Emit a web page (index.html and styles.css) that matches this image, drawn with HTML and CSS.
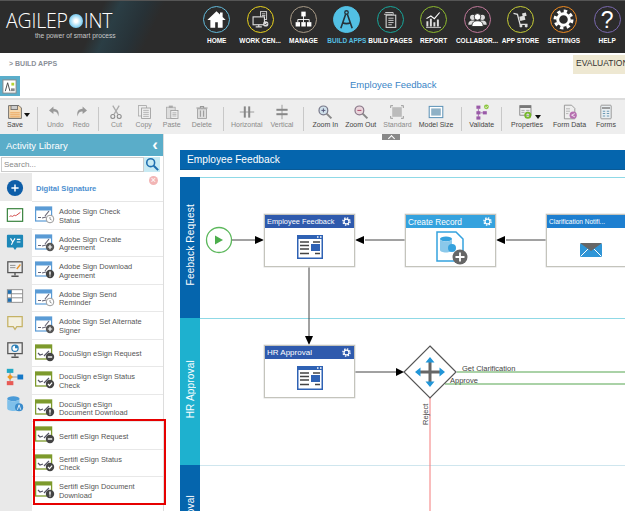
FILE: index.html
```html
<!DOCTYPE html>
<html lang="en">
<head>
<meta charset="utf-8">
<title>Build Apps</title>
<link rel="stylesheet" href="styles.css">
</head>
<body>
<svg class="defs" width="0" height="0" aria-hidden="true">
  <defs>
    <symbol id="gear" viewBox="0 0 20 20">
      <circle cx="10" cy="10" r="5.5" fill="none" stroke="currentColor" stroke-width="2.8"/>
      <circle cx="10" cy="10" r="8" fill="none" stroke="currentColor" stroke-width="3" stroke-dasharray="3.2 3.08"/>
    </symbol>
    <symbol id="sig-blue" viewBox="0 0 20 18">
      <rect x=".6" y="1" width="16" height="14" fill="#fff" stroke="#5a9bd5" stroke-width="1.200"/>
      <rect x="0" y="1" width="17" height="3.5" fill="#5a9bd5"/>
      <path d="M3 11.5h3M7 12l4-1M10 10l4-5" stroke="#667" stroke-width="1.2" fill="none"/>
    </symbol>
    <symbol id="sig-green" viewBox="0 0 20 18">
      <rect x=".6" y="1" width="16" height="14" fill="#fff" stroke="#7d9a2c" stroke-width="1.300"/>
      <rect x="0" y="1" width="17" height="3.5" fill="#7d9a2c"/>
      <path d="M3 9l2 2 3-1M9 12l5-5" stroke="#556" stroke-width="1.2" fill="none"/>
    </symbol>
    <symbol id="b-plus" viewBox="0 0 20 18">
      <circle cx="15" cy="13" r="4.2" fill="#555"/><path d="M12.8 13h4.4M15 10.8v4.4" stroke="#fff" stroke-width="1.2"/>
    </symbol>
    <symbol id="b-minus" viewBox="0 0 20 18">
      <circle cx="15" cy="13" r="4.2" fill="#444"/><path d="M12.8 13h4.4" stroke="#fff" stroke-width="1.4"/>
    </symbol>
    <symbol id="b-check" viewBox="0 0 20 18">
      <circle cx="15" cy="13" r="4.2" fill="#444"/><path d="M13 13l1.5 1.6 2.6-3" stroke="#fff" stroke-width="1.2" fill="none"/>
    </symbol>
    <symbol id="b-info" viewBox="0 0 20 18">
      <circle cx="15" cy="13" r="4.2" fill="#444"/><path d="M15 10.6v3.2M15 14.4v1.2" stroke="#fff" stroke-width="1.4"/>
    </symbol>
    <symbol id="b-clock" viewBox="0 0 20 18">
      <circle cx="15" cy="13" r="3.8" fill="#fff" stroke="#999"/><path d="M15 11v2.2l1.6.8" stroke="#999" fill="none"/>
    </symbol>
    <symbol id="form" viewBox="0 0 26 24">
      <rect x="0" y="0" width="26" height="24" fill="#2f62b4"/>
      <rect x="1.5" y="4" width="23" height="18.5" fill="#fff"/>
      <path d="M20 2h1.5M23 2h1.5" stroke="#fff" stroke-width="1.4"/>
      <path d="M3 7h9M3 10.5h9M3 14h9M3 18.5h9M16 7h7M18 18.5h5" stroke="#444" stroke-width="1.6"/>
      <rect x="14" y="9" width="9" height="7" fill="#2f62b4"/>
    </symbol>
  </defs>
</svg>

<header class="topbar">
  <div class="logo">
    <div class="logo-word">AGILEP<span class="logo-dot"></span>INT</div>
    <div class="logo-tag">the power of smart process</div>
  </div>
  <nav class="nav">
    <div class="nav-item"><span class="ring ring-home"><svg viewBox="0 0 24 24"><path d="M12 2.500L1.500 12.500h3.500v9h5.500v-6.500h3v6.500h5.500v-9h3.500l-3.500-3.300V4h-3v2.400z" fill="#fff"/></svg></span><span class="nav-label">HOME</span></div>
    <div class="nav-item"><span class="ring ring-work"><svg viewBox="0 0 24 24"><rect x="12" y="3" width="7" height="9" fill="#2d2d2d" stroke="#ddd"/><path d="M13.5 5.5h4M13.5 7.5h4" stroke="#ddd"/><rect x="3.5" y="9" width="13" height="9" fill="#2d2d2d" stroke="#ddd" stroke-width="1.3"/><path d="M10 18v2M6.500 20.500h7" stroke="#ddd" stroke-width="1.300"/><circle cx="18" cy="17" r="3" fill="#ddd"/><path d="M16.500 17l1.200 1.200 2-2.200" stroke="#2d2d2d" fill="none"/></svg></span><span class="nav-label">WORK CEN...</span></div>
    <div class="nav-item"><span class="ring ring-manage"><svg viewBox="0 0 24 24"><path d="M12 8v4M5.500 15v-3h13v3M12 12v3" stroke="#fff" fill="none"/><rect x="9.500" y="3" width="5" height="5.500" fill="#fff"/><rect x="3" y="15" width="5" height="5" fill="#fff"/><rect x="9.500" y="15" width="5" height="5" fill="#fff"/><rect x="16" y="15" width="5" height="5" fill="#fff"/></svg></span><span class="nav-label">MANAGE</span></div>
    <div class="nav-item nav-active"><span class="ring ring-apps"><svg viewBox="0 0 24 24"><circle cx="12" cy="4" r="2" fill="none" stroke="#26323a" stroke-width="1.500"/><path d="M11 6L5.500 22M13 6L18.500 22M7 15.500c3 1.500 7 1.500 10 0" stroke="#26323a" stroke-width="1.800" fill="none"/></svg></span><span class="nav-label">BUILD APPS</span></div>
    <div class="nav-item"><span class="ring ring-pages"><svg viewBox="0 0 24 24"><path d="M6 4h9v3M4.500 6h9v3" fill="none" stroke="#ddd"/><rect x="7" y="7" width="11" height="14" fill="#2d2d2d" stroke="#ddd" stroke-width="1.200"/><path d="M9.500 10.500h6M9.500 13h6M9.500 15.500h6M9.500 18h4" stroke="#ddd"/></svg></span><span class="nav-label">BUILD PAGES</span></div>
    <div class="nav-item"><span class="ring ring-report"><svg viewBox="0 0 24 24"><path d="M5 20v-6M9 20v-9M13 20v-5M17 20v-8" stroke="#ddd" stroke-width="2.200"/><path d="M3.500 21h17" stroke="#ddd"/><path d="M4 11l5-3 4 3 6-7" stroke="#fff" stroke-width="1.300" fill="none"/></svg></span><span class="nav-label">REPORT</span></div>
    <div class="nav-item"><span class="ring ring-collab"><svg viewBox="0 0 24 24"><circle cx="6.500" cy="9.500" r="3" fill="#ddd"/><circle cx="17.500" cy="9.500" r="3" fill="#ddd"/><path d="M1.500 18c0-4 2-5 5-5s5 1 5 5zM12.500 18c0-4 2-5 5-5s5 1 5 5z" fill="#ddd"/><circle cx="12" cy="9" r="3.800" fill="#fff" stroke="#2d2d2d"/><path d="M5.500 20c0-5 3-6.500 6.500-6.500s6.500 1.500 6.500 6.500z" fill="#fff" stroke="#2d2d2d"/></svg></span><span class="nav-label">COLLABOR...</span></div>
    <div class="nav-item"><span class="ring ring-store"><svg viewBox="0 0 24 24"><path d="M4 5l4.500 1 3 11.500H20" stroke="#ddd" stroke-width="1.500" fill="none"/><rect x="11" y="8" width="6" height="5" fill="#ddd" transform="rotate(-14 14 10)"/><rect x="14" y="4.500" width="4.500" height="4" fill="#ddd" transform="rotate(-14 16 6)"/><circle cx="12.500" cy="19.500" r="1.700" fill="#ddd"/><circle cx="18.500" cy="19.500" r="1.700" fill="#ddd"/></svg></span><span class="nav-label">APP STORE</span></div>
    <div class="nav-item"><span class="ring ring-settings"><svg class="gear-white" viewBox="0 0 20 20"><use href="#gear"/></svg></span><span class="nav-label">SETTINGS</span></div>
    <div class="nav-item"><span class="ring ring-help"><span class="help-mark">?</span></span><span class="nav-label">HELP</span></div>
  </nav>
</header>

<div class="crumbs">
  <span class="crumb-text">&gt; BUILD APPS</span>
  <span class="eval">EVALUATION</span>
</div>

<div class="titlerow">
  <span class="app-tile"><svg viewBox="0 0 16 16"><rect x="1" y="1" width="14" height="14" fill="#fff" stroke="#888"/><path d="M6 4L3.500 13M6 4l2.500 9" stroke="#444" fill="none"/><rect x="10" y="4" width="3" height="3" fill="#b5d334"/><rect x="9.500" y="10" width="4" height="3" fill="#888"/></svg></span>
  <span class="app-title">Employee Feedback</span>
</div>

<div class="toolbar">
  <div class="tool tool-save"><svg viewBox="0 0 20 20"><path d="M2 2h13l3 3v13H2z" fill="#f6d9b0" stroke="#555"/><rect x="5" y="2" width="8" height="5" fill="#ccc" stroke="#666"/><path d="M4 11h12M4 13.500h12M4 16h12" stroke="#e89a4a"/></svg><span class="lbl lbl-dark">Save</span></div>
  <i class="caret caret-save"></i>
  <i class="sep sep-a"></i>
  <div class="group g-undo">
    <div class="tool"><svg viewBox="0 0 20 20"><path d="M8 3L2.500 8 8 12.500V9.500c3.500 0 5.500 1.500 6 6 2-5-.5-9.500-6-9.500z" fill="#999"/></svg><span class="lbl">Undo</span></div>
    <div class="tool"><svg viewBox="0 0 20 20"><path d="M12 3l5.500 5-5.500 4.500V9.500c-3.500 0-5.500 1.500-6 6-2-5 .5-9.500 6-9.500z" fill="#999"/></svg><span class="lbl">Redo</span></div>
  </div>
  <i class="sep sep-b"></i>
  <div class="group g-edit">
    <div class="tool"><svg viewBox="0 0 20 20"><path d="M6 2l6.500 11M14 2L7.500 13" stroke="#aaa" stroke-width="1.600"/><circle cx="6" cy="15.500" r="2.500" fill="none" stroke="#8a8a8a" stroke-width="1.300"/><circle cx="14" cy="15.500" r="2.500" fill="none" stroke="#8a8a8a" stroke-width="1.300"/></svg><span class="lbl">Cut</span></div>
    <div class="tool"><svg viewBox="0 0 20 20"><path d="M3 2h9v3" fill="none" stroke="#aaa"/><rect x="3" y="2" width="10" height="13" fill="#eee" stroke="#aaa"/><rect x="7" y="5" width="11" height="13" fill="#eee" stroke="#999"/><path d="M9 8h7M9 10.500h7M9 13h7M9 15.500h7" stroke="#aaa"/></svg><span class="lbl">Copy</span></div>
    <div class="tool"><svg viewBox="0 0 20 20"><rect x="3" y="4" width="11" height="14" fill="#ddd" stroke="#aaa"/><rect x="6" y="2" width="5" height="3" fill="#aaa"/><rect x="8.500" y="8" width="9" height="10" fill="#eee" stroke="#999"/><path d="M10.500 11h5M10.500 13h5M10.500 15h5" stroke="#aaa"/></svg><span class="lbl">Paste</span></div>
    <div class="tool"><svg viewBox="0 0 20 20"><path d="M3 5h14M8 5V3h4v2" stroke="#999" fill="none" stroke-width="1.300"/><rect x="4.500" y="6" width="11" height="12" fill="#ddd" stroke="#999"/><path d="M8 8v8M12 8v8" stroke="#999" stroke-width="1.300"/></svg><span class="lbl">Delete</span></div>
  </div>
  <i class="sep sep-c"></i>
  <div class="group g-align">
    <div class="tool"><svg viewBox="0 0 20 20"><path d="M1 10h18" stroke="#888"/><rect x="6" y="3" width="2.500" height="14" fill="#888"/><rect x="11.500" y="3" width="2.500" height="14" fill="#888"/></svg><span class="lbl">Horizontal</span></div>
    <div class="tool"><svg viewBox="0 0 20 20"><path d="M10 1v18" stroke="#888"/><rect x="3" y="6" width="14" height="2.500" fill="#888"/><rect x="3" y="11.500" width="14" height="2.500" fill="#888"/></svg><span class="lbl">Vertical</span></div>
  </div>
  <i class="sep sep-d"></i>
  <div class="group g-zoom">
    <div class="tool"><svg viewBox="0 0 20 20"><circle cx="8" cy="8" r="5.500" fill="#cfe0ea" stroke="#778"  stroke-width="1.500"/><path d="M5.500 8h5M8 5.500v5" stroke="#557" stroke-width="1.200"/><path d="M12 12l6 6" stroke="#888" stroke-width="2.500"/></svg><span class="lbl lbl-dark">Zoom In</span></div>
    <div class="tool"><svg viewBox="0 0 20 20"><circle cx="8" cy="8" r="5.500" fill="#ead5dc" stroke="#878" stroke-width="1.500"/><path d="M5.500 8h5" stroke="#a46" stroke-width="1.200"/><path d="M12 12l6 6" stroke="#888" stroke-width="2.500"/></svg><span class="lbl lbl-dark">Zoom Out</span></div>
    <div class="tool"><svg viewBox="0 0 20 20"><rect x="4" y="4" width="12" height="12" fill="#bbb"/><path d="M2 2h3M2 2v3M18 2h-3M18 2v3M2 18h3M2 18v-3M18 18h-3M18 18v-3" stroke="#aaa" stroke-width="1.500"/></svg><span class="lbl">Standard</span></div>
    <div class="tool"><svg viewBox="0 0 20 20"><rect x="1.500" y="3" width="17" height="14" fill="#fff" stroke="#5f94b8" stroke-width="1.300"/><rect x="4" y="5.500" width="12" height="9" fill="#8fb1c6"/></svg><span class="lbl lbl-dark">Model Size</span></div>
  </div>
  <i class="sep sep-e"></i>
  <div class="tool tool-validate"><svg viewBox="0 0 20 20"><rect x="3" y="2" width="5" height="4" fill="#9a5aa8"/><rect x="3" y="9" width="5" height="4" fill="#9a5aa8"/><rect x="3" y="15.500" width="5" height="4" fill="#9a5aa8"/><rect x="11" y="9" width="5" height="4" fill="#9a5aa8"/><path d="M5.500 6v10M8 11h3" stroke="#9a5aa8"/><circle cx="15.500" cy="3.500" r="3" fill="#8cc63f"/><path d="M14 3.500l1.200 1.200 1.800-2" stroke="#fff" fill="none"/></svg><span class="lbl lbl-dark">Validate</span></div>
  <i class="sep sep-f"></i>
  <div class="group g-props">
    <div class="tool tool-props"><svg viewBox="0 0 20 20"><rect x="1" y="2" width="14" height="12" fill="#eee" stroke="#777"/><rect x="1" y="2" width="14" height="3" fill="#777"/><path d="M3 8h4M3 10.500h4M9 8h4M9 10.500h4" stroke="#999"/><circle cx="11" cy="14" r="3.200" fill="none" stroke="#76b82a" stroke-width="2.400"/></svg><i class="caret caret-props"></i><span class="lbl lbl-dark">Properties</span></div>
    <div class="tool"><svg viewBox="0 0 20 20"><path d="M3 1.500h9l4 4v13H3z" fill="#eee" stroke="#888"/><path d="M5 6h5M5 9h5M5 12h3" stroke="#aaa"/><circle cx="14" cy="14" r="4.500" fill="#b66fb0"/><path d="M12 14l4-2M12 14l4 2" stroke="#fff"/></svg><span class="lbl lbl-dark">Form Data</span></div>
    <div class="tool"><svg viewBox="0 0 20 20"><rect x="3.500" y="1.500" width="13" height="17" rx="1" fill="#e9eef1" stroke="#888"/><rect x="5" y="4" width="10" height="2" fill="#888"/><path d="M6 9h3M6 12h3M6 15h3M11 9h3M11 12h3M11 15h3" stroke="#6d9ab5" stroke-width="1.300"/></svg><span class="lbl lbl-dark">Forms</span></div>
  </div>
</div>

<main class="workspace">
  <aside class="library">
    <div class="lib-head"><span>Activity Library</span><span class="lib-chev">&#8249;</span></div>
    <div class="lib-search">
      <input class="lib-input" type="text" placeholder="Search...">
      <span class="lib-btn"><svg viewBox="0 0 16 16"><circle cx="6.500" cy="6.500" r="4.500" fill="none" stroke="#1f6fb0" stroke-width="1.800"/><path d="M10 10l5 5" stroke="#1f6fb0" stroke-width="2.400"/></svg></span>
    </div>
    <div class="lib-body">
      <div class="tabs">
        <div class="tab"><svg viewBox="0 0 20 20"><circle cx="10" cy="10" r="9" fill="#0e5ea8"/><path d="M6 10h8M10 6v8" stroke="#fff" stroke-width="1.600"/></svg></div>
        <div class="tab tab-on"><svg viewBox="0 0 20 20"><rect x="1.500" y="3" width="17" height="14" fill="#fff" stroke="#35803a" stroke-width="1.300"/><path d="M4 12c2-3 2 1 4-1s2 1 4-1l4-3" stroke="#c33" fill="none"/></svg></div>
        <div class="tab"><svg viewBox="0 0 20 20"><path d="M2 2h16a1 1 0 011 1v12a1 1 0 01-1 1h-6l-2 3-2-3H2a1 1 0 01-1-1V3a1 1 0 011-1z" fill="#1e88b8"/><path d="M5 6l2.500 4L10 6M7.500 10l-1.500 3M12 7h4M12 10h4" stroke="#fff" stroke-width="1.300" fill="none"/></svg></div>
        <div class="tab"><svg viewBox="0 0 20 20"><rect x="2" y="2" width="16" height="12" fill="#eee" stroke="#555" stroke-width="1.400"/><path d="M4.500 6h6M4.500 8.500h6" stroke="#888"/><path d="M12 10l4-5" stroke="#e8942a" stroke-width="1.500"/><path d="M10 14v3M6 18h8" stroke="#555" stroke-width="1.500"/></svg></div>
        <div class="tab"><svg viewBox="0 0 20 20"><rect x="1.500" y="3" width="17" height="14" fill="#fff" stroke="#888"/><path d="M1.500 7.500h17M1.500 12h17M6 3v14" stroke="#888"/><rect x="2" y="3.500" width="4" height="4" fill="#1f6fb0"/><rect x="2" y="12.500" width="4" height="4" fill="#1f6fb0"/></svg></div>
        <div class="tab"><svg viewBox="0 0 20 20"><path d="M2 3h16v11h-6l-2 3-2-3H2z" fill="#f3f0e2" stroke="#c5b265" stroke-width="1.400"/></svg></div>
        <div class="tab"><svg viewBox="0 0 20 20"><rect x="2" y="2" width="16" height="12" fill="#eee" stroke="#555" stroke-width="1.400"/><circle cx="10" cy="8" r="3.500" fill="#fff" stroke="#2a7fb8" stroke-width="1.300"/><path d="M10 8V4.500A3.500 3.500 0 0113.500 8z" fill="#2a7fb8"/><path d="M10 14v3M6 18h8" stroke="#555" stroke-width="1.500"/></svg></div>
        <div class="tab"><svg viewBox="0 0 22 22"><rect x="1" y="1" width="8" height="5" fill="#22a8c4"/><path d="M5 6v10M5 11h11" stroke="#888"/><path d="M5 7.500l3.500 3.500L5 14.500 1.500 11z" fill="#f29a1f"/><rect x="14" y="8" width="7" height="6" fill="#1478c8"/><rect x="1" y="16" width="8" height="5" fill="#e85a55"/></svg></div>
        <div class="tab"><svg viewBox="0 0 22 22"><ellipse cx="9" cy="4.500" rx="7.500" ry="3" fill="#4a9bd8"/><path d="M1.500 4.500v12c0 1.700 3.400 3 7.500 3s7.500-1.300 7.500-3v-12c0 1.700-3.400 3-7.500 3s-7.500-1.300-7.500-3z" fill="#7fc0ea"/><circle cx="16" cy="15" r="5" fill="#3a8ccc"/><path d="M14 18l2-6 2 6" stroke="#fff" fill="none"/></svg></div>
      </div>
      <div class="items">
        <div class="group-row"><span class="group-name">Digital Signature</span><span class="group-x">&#215;</span></div>
        <div class="item"><svg class="ai"><use href="#sig-blue"/><use href="#b-clock"/></svg><span>Adobe Sign Check Status</span></div>
        <div class="item"><svg class="ai"><use href="#sig-blue"/><use href="#b-plus"/></svg><span>Adobe Sign Create Agreement</span></div>
        <div class="item"><svg class="ai"><use href="#sig-blue"/><use href="#b-info"/></svg><span>Adobe Sign Download Agreement</span></div>
        <div class="item"><svg class="ai"><use href="#sig-blue"/><use href="#b-clock"/></svg><span>Adobe Sign Send Reminder</span></div>
        <div class="item"><svg class="ai"><use href="#sig-blue"/><use href="#b-plus"/></svg><span>Adobe Sign Set Alternate Signer</span></div>
        <div class="item"><svg class="ai"><use href="#sig-green"/><use href="#b-minus"/></svg><span>DocuSign eSign Request</span></div>
        <div class="item"><svg class="ai"><use href="#sig-green"/><use href="#b-check"/></svg><span>DocuSign eSign Status Check</span></div>
        <div class="item"><svg class="ai"><use href="#sig-green"/><use href="#b-info"/></svg><span>DocuSign eSign<br>Document Download</span></div>
        <div class="item"><svg class="ai"><use href="#sig-green"/><use href="#b-minus"/></svg><span>Sertifi eSign Request</span></div>
        <div class="item"><svg class="ai"><use href="#sig-green"/><use href="#b-check"/></svg><span>Sertifi eSign Status Check</span></div>
        <div class="item"><svg class="ai"><use href="#sig-green"/><use href="#b-info"/></svg><span>Sertifi eSign Document Download</span></div>
      </div>
    </div>
    <div class="redbox"></div>
  </aside>

  <section class="canvas">
    <span class="collapse-tab"></span>
    <div class="canvas-title">Employee Feedback</div>
    <div class="lanes">
      <div class="lane lane-1"><div class="lane-label"><span>Feeback Request</span></div></div>
      <div class="lane lane-2"><div class="lane-label"><span>HR Approval</span></div></div>
      <div class="lane lane-3"><div class="lane-label"><span>Approval</span></div></div>
    </div>

    <svg class="wires" width="445" height="377" viewBox="0 0 445 377">
      <g stroke="#444" stroke-width="1" fill="none">
        <path d="M52 106H76"/>
        <path d="M225 106H185"/>
        <path d="M366 106H326"/>
        <path d="M129 133V203"/>
        <path d="M174 238H216"/>
      </g>
      <g fill="#000">
        <path d="M84 106l-9-4v8z"/>
        <path d="M175 106l9-4v8z"/>
        <path d="M316 106l9-4v8z"/>
        <path d="M129 211l-4-9h8z"/>
        <path d="M224 238l-8-4v8z"/>
      </g>
      <circle cx="39" cy="106" r="12.500" fill="#fff" stroke="#5cb85c" stroke-width="1.300"/>
      <path d="M35 101.500l8 4.500-8 4.500z" fill="#4cae4c"/>
      <path d="M277 238H445M265 250H445" stroke="#8fc48a" stroke-width="1.300" fill="none"/>
      <path d="M250 264V377" stroke="#f47b7b" stroke-width="1" fill="none"/>
      <path d="M250 212l26 26-26 26-26-26z" fill="#fff" stroke="#555" stroke-width="1.200"/>
      <path d="M250 227v22M239 238h22" stroke="#666" stroke-width="3"/>
      <path d="M250 223l4.500 5.500h-9zM250 253l4.500-5.500h-9zM235 238l5.500-4.500v9zM265 238l-5.500-4.500v9z" fill="#2196d8"/>
      <text class="wire-text" x="282" y="237">Get Clarification</text>
      <text class="wire-text" x="270" y="249">Approve</text>
      <text class="wire-text" transform="translate(248 291) rotate(-90)">Reject</text>
    </svg>

    <div class="node node-ef">
      <div class="node-head head-navy"><span class="head-ef">Employee Feedback</span><svg class="node-gear" viewBox="0 0 20 20"><use href="#gear"/></svg></div>
      <div class="node-body"><svg class="node-form" viewBox="0 0 26 24"><use href="#form"/></svg></div>
    </div>
    <div class="node node-cr">
      <div class="node-head head-sky"><span>Create Record</span><svg class="node-gear" viewBox="0 0 20 20"><use href="#gear"/></svg></div>
      <div class="node-body"><svg class="node-rec" viewBox="0 0 34 34"><path d="M3 1h19l7 7v22H3z" fill="#fff" stroke="#35a2de" stroke-width="1.500"/><ellipse cx="12" cy="8" rx="6" ry="2.500" fill="#35a2de"/><path d="M6 8v11c0 1.400 2.700 2.500 6 2.500s6-1.100 6-2.500V8c0 1.400-2.700 2.500-6 2.500S6 9.400 6 8z" fill="#8ac8ea"/><circle cx="18" cy="17" r="4" fill="#35a2de"/><circle cx="26" cy="26" r="7.500" fill="#666"/><path d="M21.500 26h9M26 21.500v9" stroke="#fff" stroke-width="1.800"/></svg></div>
    </div>
    <div class="node node-cl">
      <div class="node-head head-blue"><span class="head-small">Clarification Notifi...</span></div>
      <div class="node-body"><svg class="node-mail" viewBox="0 0 22 14"><rect width="22" height="14" rx="1.500" fill="#2f95d6"/><path d="M0 0h22L11 8z" fill="#666"/><path d="M1 13l7-7M21 13l-7-7" stroke="#fff"/></svg></div>
    </div>
    <div class="node node-hr">
      <div class="node-head head-navy"><span>HR Approval</span><svg class="node-gear" viewBox="0 0 20 20"><use href="#gear"/></svg></div>
      <div class="node-body"><svg class="node-form" viewBox="0 0 26 24"><use href="#form"/></svg></div>
    </div>
  </section>
</main>
</body>
</html>
```

FILE: styles.css
```css
* { box-sizing: border-box; }
html, body { margin: 0; padding: 0; }
body {
  width: 625px;
  height: 511px;
  overflow: hidden;
  background: #fff;
  font-family: "Liberation Sans", Arial, sans-serif;
  color: #555;
}
.defs { position: absolute; }

/* top bar */
.topbar {
  height: 53px;
  display: flex;
  overflow: hidden;
  border-top: 1px solid #555;
  background:
    linear-gradient(115deg, transparent 95px, rgba(40,95,115,.35) 110px, rgba(30,60,75,.35) 135px, transparent 150px),
    #2c2c2c;
}
.logo { flex: none; width: 195px; padding: 11px 0 0 6px; color: #fff; }
.logo-word {
  width: 110px;
  display: flex;
  align-items: center;
  font-family: "Open Sans", sans-serif;
  font-weight: 300;
  font-size: 19.500px;
  line-height: 18px;
  letter-spacing: -.2px;
}
.logo-dot {
  width: 14px;
  height: 14px;
  margin: 0 1px;
  border-radius: 50%;
  background: radial-gradient(circle, #fff 15%, #8fd3f2 60%, #3aa4de 100%);
}
.logo-tag { margin: 1px 0 0 29px; font-size: 6.700px; line-height: 10px; color: #c8c8c8; white-space: nowrap; }
.nav { display: flex; flex: none; }
.nav-item {
  flex: none;
  width: 43.400px;
  display: flex;
  flex-direction: column;
  align-items: center;
  padding-top: 5px;
}
.ring {
  width: 27px;
  height: 27px;
  flex: none;
  border-radius: 50%;
  border: 1.500px solid #fff;
  display: flex;
  align-items: center;
  justify-content: center;
  color: #fff;
}
.ring svg { width: 21px; height: 21px; display: block; }
.ring-home { border-color: #62b8d8; }
.ring-work { border-color: #e8d21d; }
.ring-manage { border-color: #a89a86; }
.ring-apps { border-color: #52c0e4; background: #52c0e4; }
.ring-pages { border-color: #17a79b; }
.ring-report { border-color: #8cb92d; }
.ring-collab { border-color: #c0789a; }
.ring-store { border-color: #c6cd35; }
.ring-settings { border-color: #ef8a1f; }
.ring-help { border-color: #7a68ae; }
.gear-white { color: #fff; }
.help-mark { font-size: 23px; line-height: 24px; color: #fff; }
.nav-label {
  margin-top: 3px;
  font-size: 6.500px;
  font-weight: 700;
  line-height: 9px;
  color: #fff;
  white-space: nowrap;
}
.nav-active .nav-label { color: #55bfe2; }

/* breadcrumb and title */
.crumbs {
  height: 23px;
  display: flex;
  justify-content: space-between;
  align-items: flex-start;
  padding-left: 9px;
}
.crumb-text { margin-top: 5px; font-size: 7px; line-height: 11px; font-weight: 700; color: #8a8f98; }
.eval {
  width: 52px;
  height: 19px;
  margin-top: 2px;
  padding-left: 3px;
  overflow: hidden;
  background: #eee8d2;
  font-size: 8.500px;
  line-height: 17px;
  color: #333;
}
.titlerow { height: 20px; display: flex; align-items: center; justify-content: flex-start; }
.app-tile {
  width: 20px;
  height: 20px;
  background: #5aaecb;
  padding: 3px 2px 2px 2px;
  display: block;
}
.app-tile svg { width: 15px; height: 15px; display: block; }
.app-title { margin-left: 330px; margin-bottom: 3px; font-size: 9.500px; color: #3a85c6; white-space: nowrap; }

/* toolbar */
.toolbar {
  margin-top: 2px;
  height: 36px;
  display: flex;
  align-items: flex-start;
  padding: 4px 0 0 7px;
  background: #eeeeee;
  border-top: 2px solid #dcdcdc;
}
.group { display: flex; }
.g-undo { gap: 9px; }
.g-edit { gap: 11px; }
.g-align { gap: 8px; }
.g-zoom { gap: 7px; }
.g-props { gap: 10px; }
.tool { display: flex; flex-direction: column; align-items: center; position: relative; }
.tool svg { width: 16px; height: 16px; display: block; }
.lbl { font-size: 7px; line-height: 9px; color: #8a8a8a; white-space: nowrap; }
.lbl-dark { color: #444; }
.caret { display: block; width: 0; height: 0; border: 3px solid transparent; border-top: 4px solid #111; border-bottom: 0; }
.caret-save { margin: 9px 0 0 1px; flex: none; }
.caret-props { position: absolute; top: 11px; right: 2px; }
.sep { display: block; flex: none; width: 1px; height: 24px; margin-top: 3px; background: #c8c8c8; }
.sep-a { margin-left: 7px; margin-right: 9px; }
.sep-b { margin-left: 9px; margin-right: 9px; }
.sep-c { margin-left: 11px; margin-right: 7px; }
.sep-d { margin-left: 10px; margin-right: 8px; }
.sep-e { margin-left: 8px; margin-right: 7px; }
.sep-f { margin-left: 7px; margin-right: 9px; }

/* workspace */
.workspace { height: 377px; display: flex; }
.library {
  flex: none;
  width: 164px;
  height: 377px;
  position: relative;
  border-right: 1px solid #ddd;
}
.lib-head {
  height: 22px;
  padding: 0 5px 0 6px;
  display: flex;
  justify-content: space-between;
  align-items: center;
  background: #5aadc9;
  color: #fff;
  font-size: 9.500px;
}
.lib-chev { font-size: 17px; font-weight: 700; line-height: 20px; }
.lib-search { height: 16px; display: flex; margin-top: 1px; padding-left: 1px; }
.lib-input {
  width: 143px;
  height: 15px;
  padding: 0 2px;
  border: 1px solid #ccc;
  background: #fff;
  font-family: inherit;
  font-size: 8px;
  outline: 0;
}
.lib-input::placeholder { color: #888; }
.lib-btn { flex: none; width: 16px; height: 15px; background: #c8eaf3; padding: 0 1px; }
.lib-btn svg { width: 14px; height: 14px; display: block; }
.lib-body { display: flex; height: 339px; }
.tabs { flex: none; width: 32px; background: #e9e9e9; padding-top: 1px; }
.tab { height: 27px; display: flex; align-items: center; justify-content: center; padding-right: 2px; }
.tab svg { width: 18px; height: 18px; display: block; }
.tab-on { background: #fff; }
.items { flex: 1; min-width: 0; }
.group-row {
  height: 29px;
  padding: 10px 0 0 4px;
  display: flex;
  justify-content: space-between;
  border-bottom: 1px solid #e6e6e6;
}
.group-name { font-size: 7.600px; line-height: 11px; font-weight: 700; color: #4c8fd0; }
.group-x {
  width: 9px;
  height: 9px;
  margin: -7px 5px 0 0;
  border-radius: 50%;
  background: #f2b5b5;
  color: #fff;
  font-size: 9px;
  line-height: 9px;
  text-align: center;
}
.item {
  height: 27.500px;
  display: flex;
  align-items: center;
  gap: 4px;
  padding: 3px 0 0 3px;
  border-bottom: 1px solid #e8e8e8;
  font-size: 7.400px;
  line-height: 8.300px;
  color: #555;
}
.ai { flex: none; width: 20px; height: 18px; margin-top: -3px; }
.item span { width: 84px; }
.redbox {
  position: absolute;
  left: 33px;
  top: 285px;
  width: 133px;
  height: 86px;
  border: 2px solid #e60000;
  z-index: 3;
}

/* canvas */
.canvas {
  flex: none;
  width: 445px;
  height: 377px;
  margin-left: 16px;
  padding-top: 16px;
  position: relative;
  overflow: hidden;
}
.collapse-tab {
  position: absolute;
  left: 202px;
  top: 0;
  width: 18px;
  height: 6px;
  background: #888;
  display: flex;
  justify-content: center;
}
.collapse-tab::before {
  content: "";
  width: 4px;
  height: 4px;
  margin-top: 2px;
  border-top: 1.500px solid #fff;
  border-left: 1.500px solid #fff;
  transform: rotate(45deg);
}
.canvas-title {
  height: 20px;
  padding-left: 7px;
  background: #0565ad;
  color: #fff;
  font-size: 10.200px;
  line-height: 19px;
  border-bottom: 1px solid #0a5a96;
}
.lanes { margin-top: 7px; }
.lane { display: flex; border-top: 1px solid #8fd9e6; }
.lane-1 { height: 141px; }
.lane-2 { height: 147px; }
.lane-3 { height: 147px; border-top-color: #cfe6ee; }
.lane-label {
  flex: none;
  width: 20px;
  margin-top: -1px;
  display: flex;
  justify-content: center;
  color: #fff;
  font-size: 10px;
  letter-spacing: .2px;
  background: #0565ad;
}
.lane-label span { writing-mode: vertical-rl; transform: rotate(180deg); white-space: nowrap; }
.lane-1 .lane-label { align-items: center; padding-bottom: 6px; }
.lane-2 .lane-label { background: #1eb1cf; align-items: flex-start; padding-top: 42px; }
.lane-3 .lane-label { align-items: flex-start; padding-top: 30px; }

.wires { position: absolute; left: 0; top: 0; }
.wire-text { font-size: 7.500px; fill: #444; font-family: "Liberation Sans", Arial, sans-serif; }

.node {
  position: absolute;
  width: 91px;
  height: 53px;
  background: #fff;
  border: 1px solid #c4c4bc;
  box-shadow: 0 0 0 .5px #ddd;
  display: flex;
  flex-direction: column;
}
.node-ef { left: 84px; top: 80px; }
.node-cr { left: 225px; top: 80px; }
.node-cl { left: 366px; top: 80px; width: 100px; }
.node-hr { left: 84px; top: 211px; }
.node-head {
  height: 13px;
  flex: none;
  display: flex;
  align-items: center;
  justify-content: space-between;
  padding: 0 3px 0 2px;
  color: #fff;
  font-size: 8px;
  white-space: nowrap;
}
.head-navy { background: #2f5aad; }
.head-sky { background: #35a2de; font-size: 8.300px; }
.head-blue { background: #1e7fd0; }
.head-ef { font-size: 7.400px; }
.head-small { font-size: 6.500px; }
.node-gear { width: 9px; height: 9px; color: #fff; flex: none; }
.node-body { flex: 1; display: flex; justify-content: center; align-items: center; }
.node-form { width: 26px; height: 24px; }
.node-rec { width: 34px; height: 34px; margin-top: 1px; }
.node-mail { width: 22px; height: 14px; margin-top: 5px; margin-right: 10px; }
```
